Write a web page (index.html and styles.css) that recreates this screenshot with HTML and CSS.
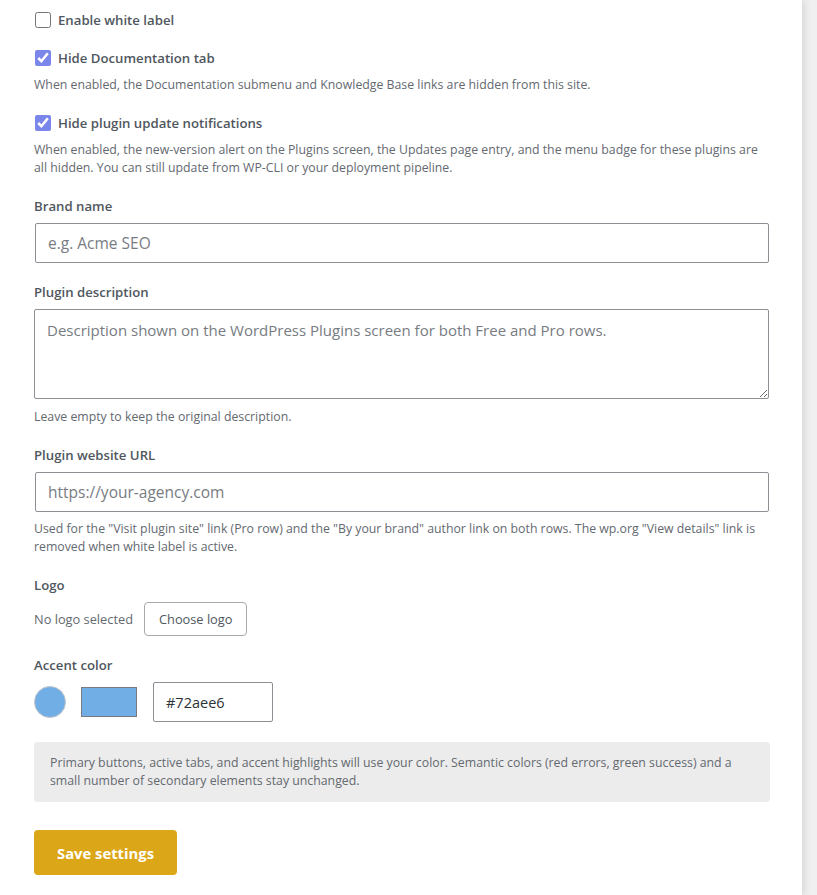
FILE: index.html
```html
<!DOCTYPE html>
<html lang="en">
<head>
    <meta charset="UTF-8">
    <title>White label settings</title>
    <link rel="stylesheet" href="styles.css">
</head>
<body>
    <div class="panel">
        <form class="settings">
            <div class="field check-field">
                <label class="check"><input type="checkbox"> Enable white label</label>
            </div>

            <div class="field check-field">
                <label class="check"><input type="checkbox" checked> Hide Documentation tab</label>
                <p class="help">When enabled, the Documentation submenu and Knowledge Base links are hidden from this site.</p>
            </div>

            <div class="field check-field">
                <label class="check"><input type="checkbox" checked> Hide plugin update notifications</label>
                <p class="help">When enabled, the new-version alert on the Plugins screen, the Updates page entry, and the menu badge for these plugins are all hidden. You can still update from WP-CLI or your deployment pipeline.</p>
            </div>

            <div class="field">
                <label class="field-label" for="brand">Brand name</label>
                <input type="text" id="brand" class="text-input" placeholder="e.g. Acme SEO">
            </div>

            <div class="field">
                <label class="field-label" for="desc">Plugin description</label>
                <textarea id="desc" class="text-area" placeholder="Description shown on the WordPress Plugins screen for both Free and Pro rows."></textarea>
                <p class="help">Leave empty to keep the original description.</p>
            </div>

            <div class="field">
                <label class="field-label" for="url">Plugin website URL</label>
                <input type="text" id="url" class="text-input" placeholder="https://your-agency.com">
                <p class="help">Used for the "Visit plugin site" link (Pro row) and the "By your brand" author link on both rows. The wp.org "View details" link is removed when white label is active.</p>
            </div>

            <div class="field">
                <span class="field-label">Logo</span>
                <div class="logo-row">
                    <span class="logo-status">No logo selected</span>
                    <button type="button" class="btn-secondary">Choose logo</button>
                </div>
            </div>

            <div class="field">
                <span class="field-label">Accent color</span>
                <div class="color-row">
                    <span class="color-dot"></span>
                    <span class="color-swatch"></span>
                    <input type="text" class="color-input" value="#72aee6">
                </div>
            </div>

            <div class="notice">
                Primary buttons, active tabs, and accent highlights will use your color. Semantic colors (red errors, green success) and a small number of secondary elements stay unchanged.
            </div>

            <button type="submit" class="btn-primary">Save settings</button>
        </form>
    </div>
</body>
</html>
```

FILE: styles.css
```css
* {
    box-sizing: border-box;
}

body {
    margin: 0;
    background: #f0f0f1;
    font-family: 'Open Sans', sans-serif;
    color: #646970;
    overflow: hidden;
}

.panel {
    width: 802px;
    height: 895px;
    background: #fff;
    box-shadow: 2px 0 8px rgba(0, 0, 0, 0.12);
    padding: 11px 33px 0 34px;
}

.settings {
    display: flex;
    flex-direction: column;
}

.field {
    margin-bottom: 20px;
}

.check-field {
    margin-bottom: 20px;
}

.check {
    display: flex;
    align-items: center;
    gap: 7px;
    font-size: 13.2px;
    font-weight: 600;
    color: #50575e;
}

.check input {
    width: 16px;
    height: 16px;
    margin: 0 0 0 1px;
    accent-color: #7b86ea;
}

.help {
    margin: 9px 0 0;
    font-size: 12.3px;
    line-height: 18px;
}

.field .text-input + .help {
    margin-top: 8px;
}

.field .text-area + .help {
    margin-top: 9px;
}

.field-label {
    display: block;
    font-size: 13.2px;
    font-weight: 600;
    color: #50575e;
    margin-bottom: 8px;
}

.text-input,
.text-area,
.color-input {
    display: block;
    border: 1px solid #8c8f94;
    border-radius: 2px;
    font-family: inherit;
    font-size: 15.5px;
    color: #2c3338;
    background: #fff;
}

.text-input {
    width: 734px;
    height: 40px;
    margin-left: 1px;
    padding: 0 12px;
}

.text-area {
    width: 735px;
    height: 90px;
    margin-top: 2px;
    padding: 10px 12px;
    font-size: 15px;
    resize: vertical;
}

.text-input::placeholder,
.text-area::placeholder {
    color: #787c82;
}

.logo-row {
    display: flex;
    align-items: center;
    gap: 11px;
}

.logo-status {
    font-size: 12.8px;
}

.btn-secondary {
    height: 34px;
    padding: 0 14px;
    border: 1px solid #a7aaad;
    border-radius: 4px;
    background: #fff;
    color: #50575e;
    font-family: inherit;
    font-size: 12.8px;
    cursor: pointer;
}

.color-row {
    display: flex;
    align-items: center;
}

.color-dot {
    width: 32px;
    height: 32px;
    border-radius: 50%;
    background: #72aee6;
    border: 1px solid #c3c4c7;
}

.color-swatch {
    width: 56px;
    height: 30px;
    margin-left: 15px;
    background: #72aee6;
    border: 1px solid #787c82;
}

.color-input {
    width: 120px;
    height: 40px;
    margin-left: 16px;
    padding: 0 12px;
    font-size: 14.5px;
}

.notice {
    width: 736px;
    background: #ececec;
    border-radius: 4px;
    padding: 12px 16px;
    font-size: 12.3px;
    line-height: 18px;
}

.btn-primary {
    align-self: flex-start;
    margin-top: 28px;
    height: 45px;
    padding: 0 23px;
    border: none;
    border-radius: 4px;
    background: #dba617;
    color: #fff;
    font-family: inherit;
    font-size: 14.8px;
    font-weight: 700;
    cursor: pointer;
}
```
